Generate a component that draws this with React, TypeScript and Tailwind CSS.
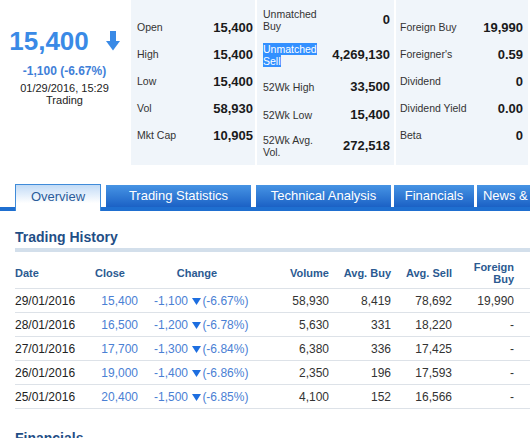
import React from 'react';

const FONT = { fontFamily: '"Liberation Sans", Arial, sans-serif' };

const leftStats: [string, string][] = [
  ['Open', '15,400'],
  ['High', '15,400'],
  ['Low', '15,400'],
  ['Vol', '58,930'],
  ['Mkt Cap', '10,905'],
];

const rightStats: [string, string][] = [
  ['Foreign Buy', '19,990'],
  ["Foreigner's", '0.59'],
  ['Dividend', '0'],
  ['Dividend Yield', '0.00'],
  ['Beta', '0'],
];

const history = [
  { date: '29/01/2016', close: '15,400', chg: '-1,100', pct: '(-6.67%)', vol: '58,930', buy: '8,419', sell: '78,692', fb: '19,990' },
  { date: '28/01/2016', close: '16,500', chg: '-1,200', pct: '(-6.78%)', vol: '5,630', buy: '331', sell: '18,220', fb: '-' },
  { date: '27/01/2016', close: '17,700', chg: '-1,300', pct: '(-6.84%)', vol: '6,380', buy: '336', sell: '17,425', fb: '-' },
  { date: '26/01/2016', close: '19,000', chg: '-1,400', pct: '(-6.86%)', vol: '2,350', buy: '196', sell: '17,593', fb: '-' },
  { date: '25/01/2016', close: '20,400', chg: '-1,500', pct: '(-6.85%)', vol: '4,100', buy: '152', sell: '16,566', fb: '-' },
];

const tabs = [
  { label: 'Trading Statistics', w: 'w-[145px]', ml: 'ml-[5px]' },
  { label: 'Technical Analysis', w: 'w-[135px]', ml: 'ml-[5px]' },
  { label: 'Financials', w: 'w-[80px]', ml: 'ml-[3px]' },
  { label: 'News & Events', w: 'w-[100px]', ml: 'ml-[3px]' },
];

const DownArrow = () => (
  <svg width="14" height="20" viewBox="0 0 14 20" className="ml-[17px]">
    <rect x="4" y="0" width="6" height="11" fill="#3a8ae6" />
    <polygon points="0,10 14,10 7,19.5" fill="#3a8ae6" />
  </svg>
);

const Tri = () => (
  <svg width="9" height="7" viewBox="0 0 9 7" className="inline-block mx-[1px] align-[0px]">
    <polygon points="0,0 9,0 4.5,7" fill="#1d6ee0" />
  </svg>
);

const StatRow = ({ label, value }: { label: string; value: string }) => (
  <div className="h-[27px] flex justify-between items-center">
    <span className="text-[10.5px] text-[#333]">{label}</span>
    <span className="text-[13px] font-bold text-[#1a1a1a]">{value}</span>
  </div>
);

export default function App() {
  return (
    <div className="w-[530px] h-[438px] overflow-hidden bg-white" style={FONT}>
      {/* quote header */}
      <div className="flex h-[165px] gap-[2px]">
        <div className="w-[129px] flex flex-col items-center pt-[28px]">
          <div className="flex items-center">
            <span className="text-[26px] leading-[26px] font-bold text-[#3a8ae6]">15,400</span>
            <DownArrow />
          </div>
          <div className="mt-[10px] text-[12px] leading-[14px] font-bold text-[#3f80d8]">-1,100 (-6.67%)</div>
          <div className="mt-[5px] text-[11px] leading-[11.5px] text-[#222] text-center">
            01/29/2016, 15:29
            <br />
            Trading
          </div>
        </div>

        <div className="w-[124px] bg-[#f0f5fa] pt-[14px] pl-[6px] pr-[2px]">
          {leftStats.map(([l, v]) => (
            <StatRow key={l} label={l} value={v} />
          ))}
        </div>

        <div className="w-[137px] bg-[#f0f5fa] pt-[3px] pl-[6px] pr-[4px] text-[10.5px] leading-[12px] text-[#333]">
          <div className="h-[34px] flex justify-between items-center">
            <span>Unmatched<br />Buy</span>
            <span className="text-[13px] font-bold text-[#1a1a1a]">0</span>
          </div>
          <div className="h-[36px] flex justify-between items-center">
            <span className="text-white">
              <span className="bg-[#3390ff]">Unmatched</span>
              <br />
              <span className="bg-[#3390ff]">Sell</span>
            </span>
            <span className="text-[13px] font-bold text-[#1a1a1a]">4,269,130</span>
          </div>
          <div className="h-[28px] flex justify-between items-center">
            <span>52Wk High</span>
            <span className="text-[13px] font-bold text-[#1a1a1a]">33,500</span>
          </div>
          <div className="h-[28px] flex justify-between items-center">
            <span>52Wk Low</span>
            <span className="text-[13px] font-bold text-[#1a1a1a]">15,400</span>
          </div>
          <div className="h-[34px] flex justify-between items-center">
            <span>52Wk Avg.<br />Vol.</span>
            <span className="text-[13px] font-bold text-[#1a1a1a]">272,518</span>
          </div>
        </div>

        <div className="w-[132px] bg-[#f0f5fa] pt-[14px] pl-[4px] pr-[5px]">
          {rightStats.map(([l, v]) => (
            <StatRow key={l} label={l} value={v} />
          ))}
        </div>
      </div>

      {/* tabs */}
      <div className="mt-[19px] flex items-end pl-[15px] border-b-4 border-[#1f6fd0] h-[27px] whitespace-nowrap">
        <div className="w-[86px] shrink-0 h-[27px] -mb-[4px] border border-b-0 border-[#3f8bd9] bg-linear-to-b from-[#c2dbf6] to-white to-70% flex items-center justify-center text-[13px] text-[#2a5b9a] pb-[2px]">
          Overview
        </div>
        {tabs.map((t) => (
          <div
            key={t.label}
            className={`${t.w} ${t.ml} shrink-0 h-[22px] bg-linear-to-b from-[#4794e4] to-[#1b61c5] flex items-center justify-center text-[13px] text-white`}
          >
            {t.label}
          </div>
        ))}
      </div>

      {/* trading history */}
      <div className="ml-[15px]">
        <h3 className="mt-[18px] text-[14px] leading-[16px] font-bold text-[#1f4e86]">Trading History</h3>
        <div className="mt-[3px] h-[4px] bg-[#d3dfeb]" />

        <div className="h-[37px] pt-[6px] flex items-center border-b border-[#dde2e8] text-[11px] font-bold text-[#2b5a91]">
          <div className="w-[70px]">Date</div>
          <div className="w-[60px] pl-[10px]">Close</div>
          <div className="w-[115px] text-center pr-[11px]">Change</div>
          <div className="w-[75px] text-right pr-[6px]">Volume</div>
          <div className="w-[61px] text-right pr-[5px]">Avg. Buy</div>
          <div className="w-[62px] text-right pr-[6px]">Avg. Sell</div>
          <div className="flex-1 text-right pr-[16px] leading-[12px]">
            Foreign
            <br />
            Buy
          </div>
        </div>

        {history.map((r) => (
          <div key={r.date} className="h-[24px] flex items-center border-b border-[#dde2e8] text-[12px] text-[#333]">
            <div className="w-[70px] text-[#222]">{r.date}</div>
            <div className="w-[60px] text-right pr-[7px] text-[#4a80d4]">{r.close}</div>
            <div className="w-[115px] pl-[9px] text-[#4a80d4] whitespace-nowrap">
              {r.chg} <Tri />{r.pct}
            </div>
            <div className="w-[75px] text-right pr-[6px]">{r.vol}</div>
            <div className="w-[61px] text-right pr-[5px]">{r.buy}</div>
            <div className="w-[62px] text-right pr-[6px]">{r.sell}</div>
            <div className="flex-1 text-right pr-[16px]">{r.fb}</div>
          </div>
        ))}

        <h3 className="mt-[21px] text-[14px] leading-[16px] font-bold text-[#1f4e86]">Financials</h3>
      </div>
    </div>
  );
}
